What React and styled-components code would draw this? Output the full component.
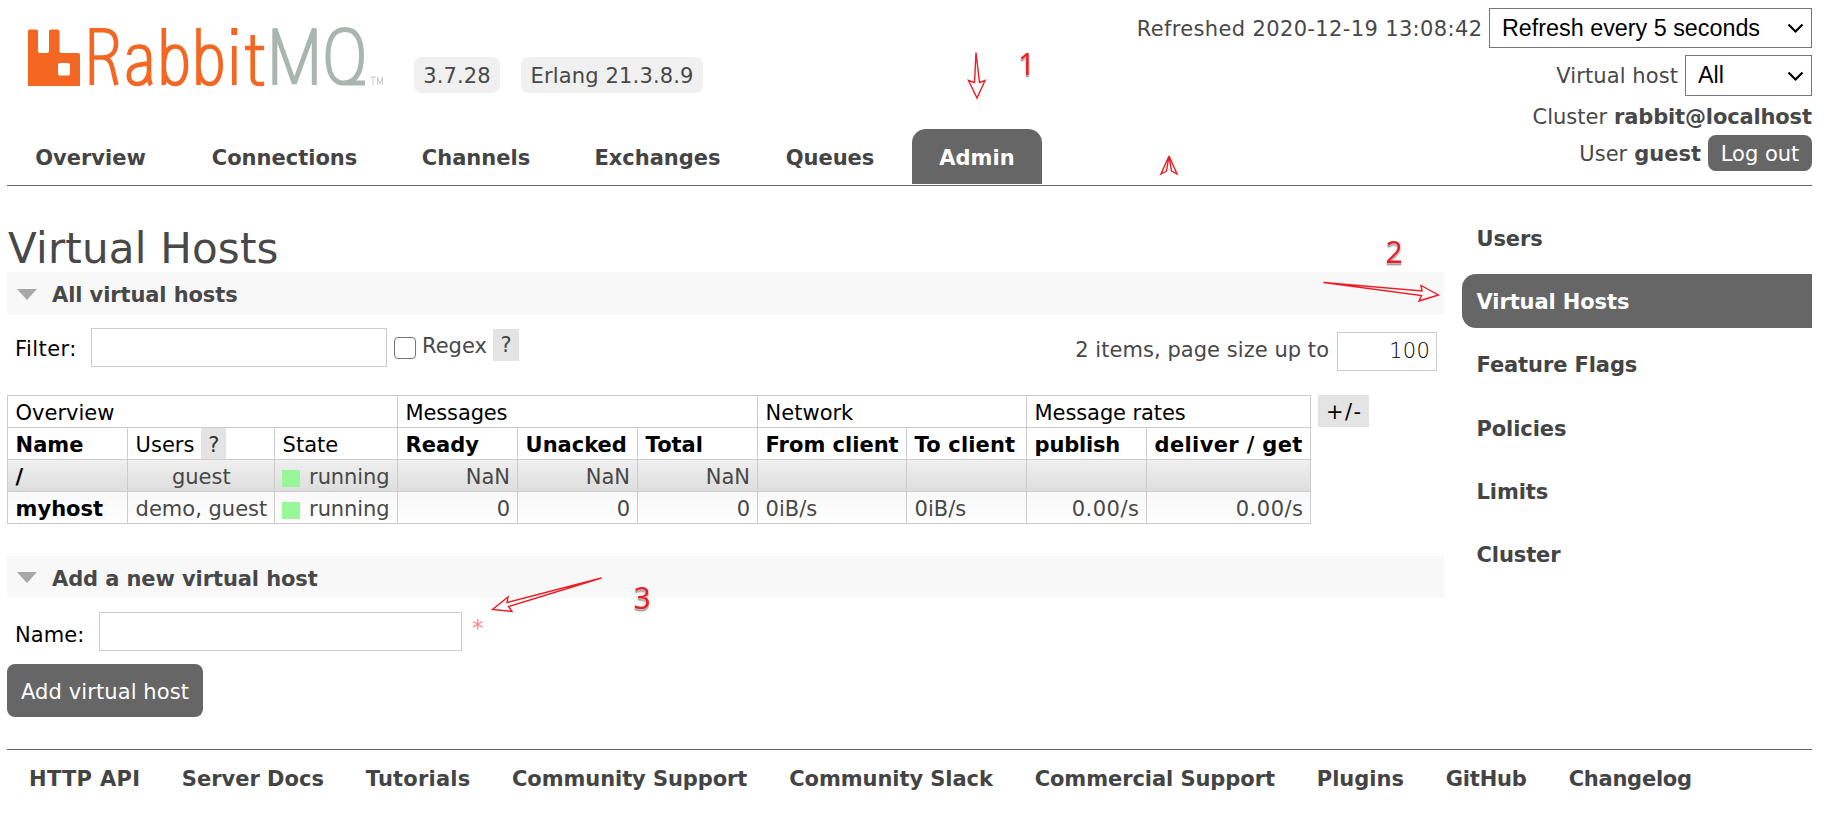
import React from "react";
import styled, { createGlobalStyle, css } from "styled-components";

const Global = createGlobalStyle`
  * { box-sizing: border-box; }
  body {
    margin: 0;
    background: #fff;
    color: #484848;
    font: 21px/32px Verdana, "DejaVu Sans", sans-serif;
  }
`;

const T = styled.span`
  letter-spacing: ${(p) => p.$ls || 0}px;
  margin-right: ${(p) => -(p.$ls || 0)}px;
  white-space: pre;
`;

const Page = styled.div`
  position: relative;
  width: 1836px;
  height: 814px;
  padding: 0 24px 0 7px;
  overflow: hidden;
`;

const Header = styled.header`
  display: flex;
  justify-content: space-between;
  height: 186px;
  border-bottom: 1px solid #666;
`;

const Brand = styled.div`
  display: flex;
  flex-direction: column;
  justify-content: space-between;
  padding-bottom: 1px;
`;

const BrandRow = styled.div`
  display: flex;
  align-items: flex-start;
  padding: 22px 0 0 21px;
`;

const Logo = styled.svg`
  display: block;
  width: 360px;
  height: 70px;
  margin-right: 26px;
`;

const Version = styled.span`
  width: ${(p) => p.$w}px;
  height: 36px;
  margin: 35px 21px 0 0;
  border-radius: 8px;
  background: #f0f0f0;
  line-height: 38px;
  text-align: center;
`;

const Tabs = styled.nav`
  display: flex;
  gap: 10px;
`;

const Tab = styled.a`
  height: 55px;
  width: ${(p) => p.$w}px;
  text-align: center;
  line-height: 58px;
  font-weight: bold;
  color: ${(p) => (p.$on ? "#fff" : "#444")};
  background: ${(p) => (p.$on ? "#666" : "none")};
  border-radius: 14px 14px 0 0;
`;

const Status = styled.div`
  display: flex;
  flex-direction: column;
  align-items: flex-end;
  padding-top: 8px;
`;

const StatusLine = styled.div`
  display: flex;
  align-items: center;
  gap: 7px;
  height: ${(p) => p.$h}px;
  margin-bottom: ${(p) => p.$mb || 0}px;
  line-height: 34px;
  & > ${T}, & > b {
    padding-top: ${(p) => p.$drop || 0}px;
  }
`;

const Select = styled.div`
  display: flex;
  align-items: center;
  justify-content: space-between;
  width: ${(p) => p.$w}px;
  height: 100%;
  padding: 0 7px 0 12px;
  border: 1px solid #767676;
  font: 23.33px "Liberation Sans", Arial, sans-serif;
  color: #000;
  svg {
    margin-top: 1px;
  }
`;

const Logout = styled.button`
  width: 104px;
  height: 36px;
  padding: 1px 0 0;
  border: 0;
  border-radius: 8px;
  background: #666;
  color: #fff;
  font: inherit;
`;

const Body = styled.div`
  display: flex;
  justify-content: space-between;
  height: 563px;
`;

const Main = styled.main`
  width: 1437px;
`;

const Title = styled.h1`
  margin: 0;
  padding: 38px 0 0 1px;
  height: 86px;
  font-size: 42px;
  line-height: 50px;
  font-weight: normal;
`;

const SectionHead = styled.h2`
  display: flex;
  align-items: center;
  gap: 15px;
  height: ${(p) => p.$h}px;
  margin: 0;
  padding: 1px 0 0 10px;
  background: #f8f8f8;
  font-size: 21px;
  & > ${T} {
    padding-top: ${(p) => p.$drop || 0}px;
  }
`;

const Triangle = styled.i`
  width: 20px;
  border: 10px solid transparent;
  border-top: 11px solid #a8a8a8;
  border-bottom: 0;
`;

const FilterRow = styled.div`
  display: flex;
  align-items: flex-start;
  height: 80px;
  padding: 13px 7px 0 8px;
`;

const Label = styled.label`
  width: ${(p) => p.$w}px;
  padding-top: ${(p) => p.$top || 5}px;
  color: #000;
`;

const Field = styled.input`
  display: block;
  width: ${(p) => p.$w}px;
  height: 39px;
  margin: 0;
  padding: 0 6px 2px;
  border: 1px solid #ccc;
  font: inherit;
  font-weight: 200;
  letter-spacing: 0.2px;
  text-align: ${(p) => (p.$right ? "right" : "left")};
  outline: 0;
  color: #000;
`;

const Check = styled.span`
  width: 22px;
  height: 22px;
  margin: 9px 6px 0 7px;
  border: 1.5px solid #767676;
  border-radius: 4px;
`;

const Help = styled.span`
  display: inline-block;
  width: 26px;
  height: 32px;
  text-align: center;
  background: #e4e4e4;
`;

const RegexText = styled.span`
  width: 71px;
  padding-top: 2px;
`;

const HelpTop = styled.div`
  padding-top: 1px;
  height: 33px;
  flex: 1;
`;

const Paging = styled.div`
  display: flex;
  gap: 8px;
  padding-top: 4px;
  & > ${T} {
    padding-top: 2px;
  }
`;

const TableRow = styled.div`
  display: flex;
  align-items: flex-start;
  gap: 7px;
  height: 161px;
`;

const Table = styled.table`
  width: 1303px;
  table-layout: fixed;
  border-collapse: collapse;
`;

const Cell = styled.td`
  height: 32px;
  padding: 3px 7px 0 7.6px;
  border: 1px solid #ccc;
  line-height: 28px;
  white-space: nowrap;
  text-align: ${(p) => p.$align || "left"};
  ${(p) => p.$head && css`color: #000;`}
  ${(p) => p.$bold && css`color: #000; font-weight: bold;`}
`;

const Row = styled.tr`
  background: ${(p) =>
    p.$shade === "dark" ? "linear-gradient(#f0f0f0, #ddd)" : p.$shade === "light" ? "linear-gradient(#f8f8f8, #fff)" : "#fff"};
`;

const HeadHelp = styled(Help)`
  width: 25px;
  height: 31px;
  margin: -3px 0 0 7px;
  padding-top: 3px;
  color: #333;
  vertical-align: top;
`;

const State = styled.span`
  display: flex;
  align-items: center;
  gap: 9.5px;
  margin-left: -1px;
  &::before {
    content: "";
    width: 18px;
    height: 17px;
    margin-top: 2px;
    background: #98f898;
  }
`;

const ColumnsButton = styled.span`
  width: 51px;
  height: 32px;
  padding-top: 1px;
  background: #e4e4e4;
  color: #000;
  text-align: center;
`;

const NameRow = styled.div`
  display: flex;
  height: 66px;
  padding: 14px 0 0 8px;
`;

const Required = styled.span`
  margin-left: 10px;
  font-size: 23px;
  color: #f88;
`;

const Submit = styled.button`
  display: block;
  width: 196px;
  height: 53px;
  padding: 2px 0 0;
  border: 0;
  border-radius: 8px;
  background: #666;
  color: #fff;
  font: inherit;
`;

const Side = styled.aside`
  width: 350px;
  padding-top: 25px;
`;

const SideLink = styled.a`
  display: block;
  height: 54px;
  margin-bottom: 9.2px;
  padding-left: 14.5px;
  border-radius: 14px 0 0 14px;
  line-height: 56px;
  font-weight: bold;
  color: ${(p) => (p.$on ? "#fff" : "#444")};
  background: ${(p) => (p.$on ? "#666" : "none")};
`;

const Footer = styled.footer`
  display: flex;
  gap: 41.8px;
  padding: 13px 0 0 22px;
  border-top: 1px solid #666;
  font-weight: bold;
  color: #444;
`;

const Marks = styled.svg`
  position: absolute;
  inset: 0;
  pointer-events: none;
`;

const MarkText = styled.text`
  font: 30px "Noto Sans", sans-serif;
  fill: #ed1c24;
  filter: drop-shadow(0 0 1px #fff) drop-shadow(0 2px 0.5px #999);
`;

const Chevron = () => (
  <svg width="17" height="11" viewBox="0 0 17 11" fill="none" stroke="#000" strokeWidth="2.2">
    <path d="M1.5 1.5 8.5 8.5 15.5 1.5" />
  </svg>
);

const RabbitLogo = () => (
  <Logo viewBox="28 22 360 70">
    <path
      fill="#f46722"
      d="M28 31q0-1.500 1.500-1.500H36q2 0 2 2V51q0 2 2 2h7q2 0 2-2V31.500q0-2 2-2h6.500q2 0 2 2V51q0 2 2 2H78q2 0 2 2V86H28ZM60 63q-2 0-2 2v8.500q0 2 2 2h8q2 0 2-2V65q0-2-2-2Z"
      fillRule="evenodd"
    />
    <g fill="none" stroke="#f46722" strokeWidth="4.600">
      <path d="M91.800 85V30.300H103C113 30.300 116 36 116 43.500 116 52 111 57.500 102 57.500H92M102 57.500C113 57.500 112 70 116.500 85" />
      <path d="M129 55C130 47.500 134 46.500 139 46.500 146 46.500 149 50 149 57V75Q149 82 151 85M149 63.500C139 64.500 128.800 65 128.800 75 128.800 81 132 84 137 84 144 84 149 78 149 70" />
      <path d="M163.800 28V85M163.800 66C163.800 53 168 46.500 175.500 46.500S186 55 186 65.500 182 84 175.500 84 163.800 78 163.800 66" />
      <path d="M198.500 28V85M198.500 66C198.500 53 202.700 46.500 210.200 46.500S220.700 55 220.700 65.500 216.700 84 210.200 84 198.500 78 198.500 66" />
      <path d="M234.300 46V85M245 48H264M252.700 35V77Q252.700 86 264 83.500" />
      <path strokeWidth="6" d="M234.300 28V35" />
    </g>
    <g fill="none" stroke="#a9b6af" strokeWidth="5">
      <path strokeLinejoin="bevel" d="M274.800 85V28.500L294.300 83.500 314.300 28.500V85" />
      <path d="M345 29.500C334 29.500 328 39 328 56.500S334 83 344 83 361.500 74 361.500 56.500 356 29.500 345 29.500M344 83H365" />
    </g>
    <g fill="none" stroke="#c6ccc8" strokeWidth="1">
      <path d="M370 77H376M373 77V85M377.500 85V77L380 84 382.500 77V85" />
    </g>
  </Logo>
);

const tabs = [["Overview", 167], ["Connections", 201], ["Channels", 162], ["Exchanges", 181], ["Queues", 144], ["Admin", 130]];
const side = ["Users", "Virtual Hosts", "Feature Flags", "Policies", "Limits", "Cluster"];
const footer = [
  ["HTTP API", 0.3], ["Server Docs", 0], ["Tutorials", 0.2], ["Community Support", -0.08], ["Community Slack", -0.07],
  ["Commercial Support", -0.07], ["Plugins", 0], ["GitHub", -0.2], ["Changelog", -0.25],
];
const columns = [120, 147, 123, 120, 120, 120, 149, 120, 120, 164];
const measures = [
  ["Ready", 0], ["Unacked", 0], ["Total", 0], ["From client", 0], ["To client", 0.15], ["publish", -0.2], ["deliver / get", 0.35],
];

export default function App() {
  return (
    <Page>
      <Global />
      <Header>
        <Brand>
          <BrandRow>
            <RabbitLogo />
            <Version $w={86}><T $ls={0.1}>3.7.28</T></Version>
            <Version $w={182}><T $ls={0.15}>Erlang 21.3.8.9</T></Version>
          </BrandRow>
          <Tabs>
            {tabs.map(([name, w]) => (
              <Tab key={name} $w={w} $on={name === "Admin"}><T>{name}</T></Tab>
            ))}
          </Tabs>
        </Brand>
        <Status>
          <StatusLine $h={40} $mb={7} $drop={2}>
            <T $ls={0.36}>Refreshed 2020-12-19 13:08:42</T>
            <Select $w={323}>Refresh every 5 seconds<Chevron /></Select>
          </StatusLine>
          <StatusLine $h={41} $mb={4}>
            <T $ls={0.1}>Virtual host</T>
            <Select $w={127}>All<Chevron /></Select>
          </StatusLine>
          <StatusLine $h={32} $mb={3} $drop={2}><T>Cluster</T><b><T $ls={-0.15}>rabbit@localhost</T></b></StatusLine>
          <StatusLine $h={36} $drop={2}><T>User</T><b><T>guest</T></b><Logout><T>Log out</T></Logout></StatusLine>
        </Status>
      </Header>
      <Body>
        <Main>
          <Title><T $ls={0.2}>Virtual Hosts</T></Title>
          <SectionHead $h={43} $drop={1}><Triangle /><T $ls={-0.1}>All virtual hosts</T></SectionHead>
          <FilterRow>
            <Label $w={76}><T $ls={0.45}>Filter:</T></Label>
            <Field $w={296} />
            <Check />
            <RegexText><T>Regex</T></RegexText>
            <HelpTop><Help>?</Help></HelpTop>
            <Paging><T $ls={0.05}>2 items, page size up to</T><Field $w={100} $right defaultValue="100" /></Paging>
          </FilterRow>
          <TableRow>
            <Table>
              <colgroup>{columns.map((w, i) => <col key={i} width={w} />)}</colgroup>
              <tbody>
                <Row>
                  <Cell $head colSpan={3}><T>Overview</T></Cell>
                  <Cell $head colSpan={3}><T $ls={-0.15}>Messages</T></Cell>
                  <Cell $head colSpan={2}><T>Network</T></Cell>
                  <Cell $head colSpan={2}><T $ls={-0.1}>Message rates</T></Cell>
                </Row>
                <Row>
                  <Cell $bold><T>Name</T></Cell>
                  <Cell $head><T>Users</T><HeadHelp>?</HeadHelp></Cell>
                  <Cell $head><T>State</T></Cell>
                  {measures.map(([h, ls]) => (
                    <Cell key={h} $bold><T $ls={ls}>{h}</T></Cell>
                  ))}
                </Row>
                <Row $shade="dark">
                  <Cell $bold>/</Cell>
                  <Cell $align="center"><T>guest</T></Cell>
                  <Cell><State><T $ls={-0.1}>running</T></State></Cell>
                  <Cell $align="right">NaN</Cell>
                  <Cell $align="right">NaN</Cell>
                  <Cell $align="right">NaN</Cell>
                  <Cell /><Cell /><Cell /><Cell />
                </Row>
                <Row $shade="light">
                  <Cell $bold><T>myhost</T></Cell>
                  <Cell $align="center"><T>demo, guest</T></Cell>
                  <Cell><State><T $ls={-0.1}>running</T></State></Cell>
                  <Cell $align="right">0</Cell>
                  <Cell $align="right">0</Cell>
                  <Cell $align="right">0</Cell>
                  <Cell><T>0iB/s</T></Cell>
                  <Cell><T>0iB/s</T></Cell>
                  <Cell $align="right"><T $ls={0.5}>0.00/s</T></Cell>
                  <Cell $align="right"><T $ls={0.5}>0.00/s</T></Cell>
                </Row>
              </tbody>
            </Table>
            <ColumnsButton><T $ls={1.5}>+/-</T></ColumnsButton>
          </TableRow>
          <SectionHead $h={42} $drop={2}><Triangle /><T $ls={-0.1}>Add a new virtual host</T></SectionHead>
          <NameRow>
            <Label $w={84} $top={7}><T $ls={0.1}>Name:</T></Label>
            <Field $w={363} />
            <Required>*</Required>
          </NameRow>
          <Submit><T $ls={0.1}>Add virtual host</T></Submit>
        </Main>
        <Side>
          {side.map((s) => <SideLink key={s} $on={s === "Virtual Hosts"}><T $ls={-0.1}>{s}</T></SideLink>)}
        </Side>
      </Body>
      <Footer>{footer.map(([f, ls]) => <T key={f} $ls={ls}>{f}</T>)}</Footer>
      <Marks width="1836" height="814" viewBox="0 0 1836 814">
        <g fill="none" stroke="#ed1c24" strokeWidth="1.400">
          <path d="M976 52.500 974.500 82.500 968.500 80.500 977 98 985 80.500 979.500 82.500Z" />
          <path d="M1169 156 1161 174 1166.500 171ZM1169 156 1177 174 1171.500 171Z" />
          <path d="M1323.500 282.500 1422 291 1421 285.500 1438.500 295 1419 301 1421.500 295.500Z" />
          <path d="M601.500 578 507 602.500 508 597 492.500 609.500 512 611.500 508.500 606.500Z" />
        </g>
        <MarkText x="1018" y="75">1</MarkText>
        <MarkText x="1385.500" y="262.500">2</MarkText>
        <MarkText x="633.500" y="608.500">3</MarkText>
      </Marks>
    </Page>
  );
}
